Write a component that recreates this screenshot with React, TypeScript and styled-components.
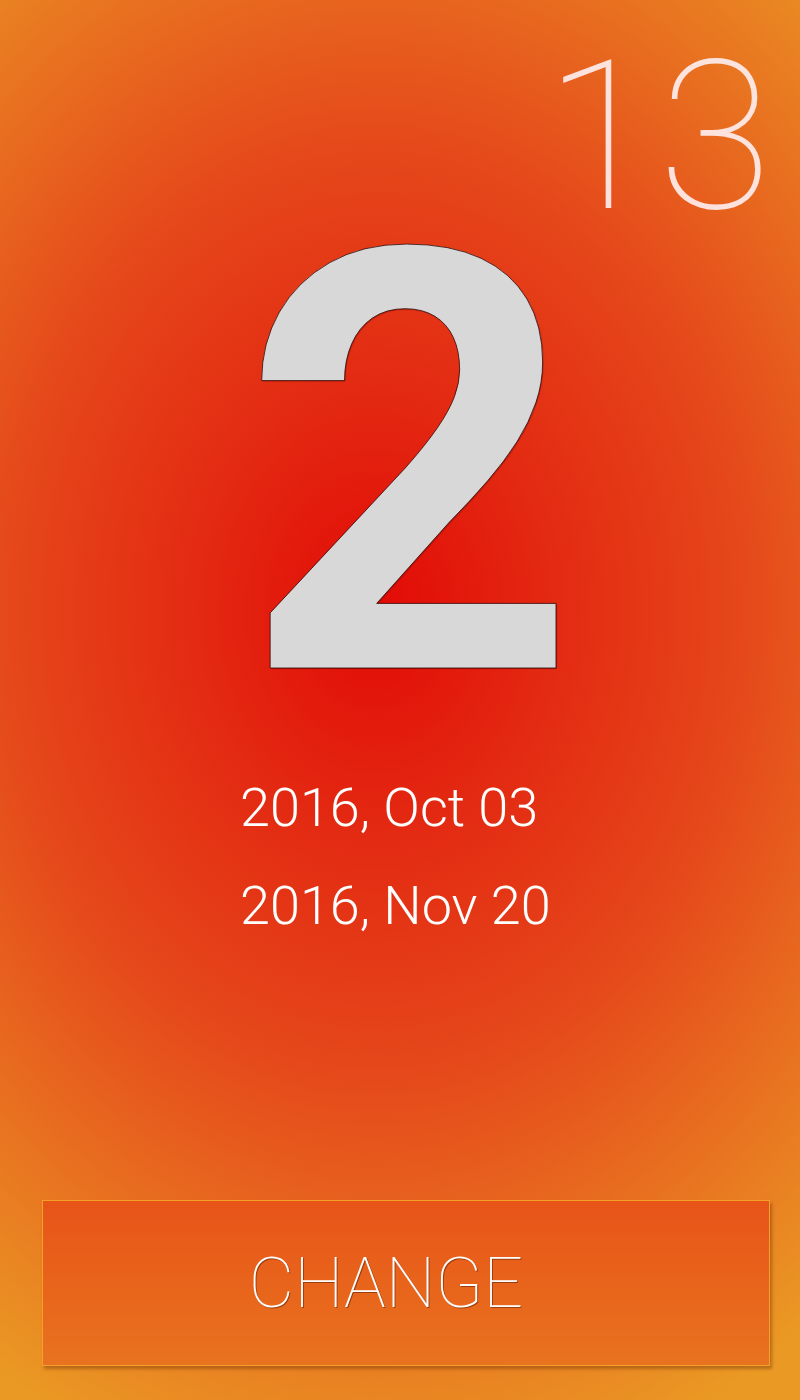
import React from "react";
import styled, { createGlobalStyle } from "styled-components";

const Global = createGlobalStyle`
  html, body { margin: 0; padding: 0; }
  body { font-family: Roboto, "Liberation Sans", sans-serif; }
`;

const Page = styled.div`
  width: 800px;
  height: 1400px;
  display: flex;
  flex-direction: column;
  box-sizing: border-box;
  overflow: hidden;
  background: radial-gradient(
    ellipse 720px 900px at 375px 610px,
    #e20a06 0%,
    #e32a12 25%,
    #e5461a 50%,
    #e87020 75%,
    #ea9a24 100%
  );
  font-family: Roboto, "Liberation Sans", sans-serif;
`;

const Counter = styled.div`
  margin-top: 58px;
  padding-right: 28px;
  text-align: right;
  font-size: 208px;
  font-weight: 100;
  line-height: 0.76;
  color: rgba(255, 240, 242, 0.9);
`;

const BigDigit = styled.div`
  margin-top: 34px;
  padding-left: 20px;
  text-align: center;
  font-size: 588px;
  font-weight: 700;
  line-height: 0.74;
  color: #d8d8d8;
  -webkit-text-stroke: 1px rgba(40, 0, 0, 0.75);
  text-shadow: 1px 1px 1px rgba(80, 0, 0, 0.3);
`;

const Dates = styled.div`
  margin-top: 74px;
  padding-left: 240px;
  display: flex;
  flex-direction: column;
`;

const DateLine = styled.div`
  font-size: 54px;
  font-weight: 300;
  line-height: 98px;
  color: #ffffff;
`;

const Spacer = styled.div`
  flex: 1;
`;

const ChangeButton = styled.button`
  margin: 0 0 34px 42px;
  width: 728px;
  height: 166px;
  box-sizing: border-box;
  border: 1px solid #f5a028;
  border-radius: 0;
  padding: 0 40px 0 0;
  background: linear-gradient(180deg, #e85418 0%, #e8731f 100%);
  box-shadow: 2px 3px 3px rgba(90, 30, 0, 0.35);
  color: #ffffff;
  font-family: Roboto, "Liberation Sans", sans-serif;
  font-size: 70px;
  font-weight: 100;
  text-shadow: 1px 1px 0 rgba(90, 30, 0, 0.55);
  cursor: pointer;
`;

export default function App() {
  return (
    <>
      <Global />
      <Page>
        <Counter>13</Counter>
        <BigDigit>2</BigDigit>
        <Dates>
          <DateLine>2016, Oct 03</DateLine>
          <DateLine>2016, Nov 20</DateLine>
        </Dates>
        <Spacer />
        <ChangeButton>CHANGE</ChangeButton>
      </Page>
    </>
  );
}
